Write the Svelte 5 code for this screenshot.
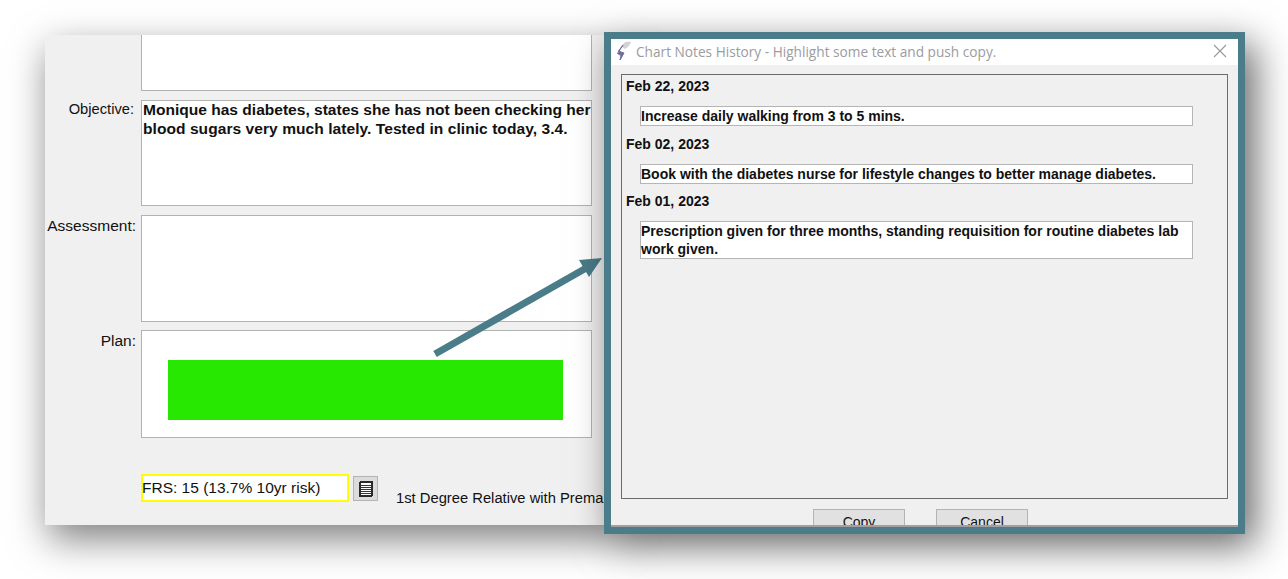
<script>
  const notes = [
    { date: 'Feb 22, 2023', text: 'Increase daily walking from 3 to 5 mins.' },
    { date: 'Feb 02, 2023', text: 'Book with the diabetes nurse for lifestyle changes to better manage diabetes.' },
    { date: 'Feb 01, 2023', text: 'Prescription given for three months, standing requisition for routine diabetes lab work given.' }
  ];
</script>

<div class="canvas">
  <section class="panel">
    <div class="form">
      <div class="row"><span class="label"></span><div class="field f1"></div></div>
      <div class="row"><span class="label l-obj">Objective:</span><div class="field f2 bold"><div class="lines">Monique has diabetes, states she has not been checking her<br /><span class="line2">blood sugars very much lately. Tested in clinic today, 3.4.</span></div></div></div>
      <div class="row"><span class="label l-ass">Assessment:</span><div class="field f3"></div></div>
      <div class="row"><span class="label l-plan">Plan:</span><div class="field f4"><div class="redact"></div></div></div>
    </div>
    <div class="footer">
      <div class="frs">FRS: 15 (13.7% 10yr risk)</div>
      <button class="iconbtn" aria-label="Notes">
        <svg width="14" height="16" viewBox="0 0 14 16" shape-rendering="crispEdges">
          <rect x="1" y="1" width="12" height="14" rx="1" fill="#fff" stroke="#2a2a2a" stroke-width="2"/>
          <path d="M2 4.5h10M2 6.5h10M2 8.5h10M2 10.5h10M2 12.5h10" stroke="#333" stroke-width="1"/>
        </svg>
      </button>
      <span class="relative">1st Degree Relative with Prema</span>
    </div>
  </section>

  <svg class="arrow" width="180" height="110" viewBox="0 0 180 110">
    <path d="M5 104 L158 17" stroke="#4a7c89" stroke-width="7" fill="none"/>
    <path d="M172 8 L149 10 L159 27 Z" fill="#4a7c89"/>
  </svg>

  <section class="dialog">
    <header class="titlebar">
      <svg class="logo" width="16" height="21" viewBox="0 0 16 21">
        <path d="M15 1 C10 0 6 2 6 6 L9 8 C12 6 14 4 15 1 Z" fill="#d2d2d6"/>
        <path d="M7 4 L2.5 10 L8 12 L4 19 L5 14.5 L1.5 12.5 Z" fill="#6f6f9a" stroke="#6f6f9a" stroke-width="1" stroke-linejoin="round"/>
      </svg>
      <span class="title">Chart Notes History - Highlight some text and push copy.</span>
      <svg class="close" width="14" height="14" viewBox="0 0 14 14">
        <path d="M1 1 L13 13 M13 1 L1 13" stroke="#999" stroke-width="1.1" fill="none"/>
      </svg>
    </header>
    <div class="body">
      <div class="history">
        {#each notes as n}
          <div class="date">{n.date}</div>
          <div class="note">{n.text}</div>
        {/each}
      </div>
      <div class="actions">
        <button class="btn">Copy</button>
        <button class="btn">Cancel</button>
      </div>
    </div>
  </section>
</div>

<style>
  :global(body) {
    margin: 0;
    background: #fff;
  }
  .canvas {
    position: relative;
    width: 1288px;
    height: 579px;
    overflow: hidden;
    font-family: "Liberation Sans", Arial, sans-serif;
    font-size: 14px;
    color: #111;
    background: #fff;
  }
  .panel {
    position: absolute;
    left: 45px;
    top: 35px;
    width: 570px;
    height: 490px;
    background: #f0f0f0;
    box-shadow: 4px 14px 36px rgba(0, 0, 0, 0.5);
    overflow: hidden;
  }
  .form {
    display: flex;
    flex-direction: column;
    gap: 8px;
    margin-top: -1px;
  }
  .row {
    display: grid;
    grid-template-columns: 96px 451px;
  }
  .label {
    text-align: right;
    padding-right: 5px;
    font-size: 15.5px;
    line-height: 18px;
  }
  .l-obj { padding: 0 7px 0 0; font-size: 14.7px; }
  .l-ass { padding-top: 2px; }
  .l-plan { padding-top: 2px; }
  .field {
    box-sizing: border-box;
    background: #fff;
    border: 1px solid #b2b2b2;
  }
  .f1 { height: 57px; margin-bottom: 1px; border-top: 0; }
  .f2 { height: 106px; margin-bottom: 1px; padding: 0 0 0 1px; }
  .f3 { height: 107px; }
  .f4 { height: 108px; padding: 29px 28px 0 26px; }
  .bold {
    font-weight: 700;
    font-size: 15.55px;
    line-height: 19px;
    white-space: nowrap;
  }
  .lines { margin-top: -1px; }
  .line2 { letter-spacing: 0.05px; }
  .redact {
    height: 60px;
    background: #27e800;
  }
  .footer {
    position: absolute;
    left: 96px;
    top: 439px;
    display: flex;
    align-items: flex-start;
    white-space: nowrap;
    font-size: 15.5px;
  }
  .frs {
    box-sizing: border-box;
    width: 208px;
    height: 28px;
    border: 2px solid #ffff00;
    background: #fff;
    text-indent: -1px;
    line-height: 24px;
  }
  .iconbtn {
    box-sizing: border-box;
    width: 25px;
    height: 25px;
    margin: 2px 0 0 4px;
    padding: 0;
    display: flex;
    align-items: center;
    justify-content: center;
    background: #dcdcdc;
    border: 1px solid #b4b4b4;
  }
  .relative {
    margin: 15px 0 0 18px;
    font-size: 14.75px;
    line-height: 18px;
  }
  .arrow {
    position: absolute;
    left: 430px;
    top: 250px;
  }
  .dialog {
    position: absolute;
    left: 604px;
    top: 32px;
    box-sizing: border-box;
    width: 641px;
    height: 502px;
    border: 7px solid #4a7c89;
    background: #f0f0f0;
    box-shadow: 10px 12px 36px rgba(0, 0, 0, 0.6);
    display: flex;
    flex-direction: column;
    overflow: hidden;
  }
  .titlebar {
    flex: none;
    box-sizing: border-box;
    height: 26px;
    background: #fff;
    display: flex;
    align-items: center;
    padding: 0 11px 2px 5px;
  }
  .logo { flex: none; margin-right: 4px; }
  .title {
    flex: 1;
    color: #9b9ba0;
    font-family: "Open Sans", "Noto Sans", sans-serif;
    font-size: 13.67px;
    white-space: nowrap;
  }
  .body {
    flex: 1;
    padding: 9px 10px 0 10px;
    min-height: 0;
    overflow: hidden;
    border-bottom: 2px solid #a0a0a0;
  }
  .history {
    box-sizing: border-box;
    height: 425px;
    border: 1px solid #6c6c6c;
    padding: 3px 34px 0 4px;
  }
  .date {
    font-weight: 700;
    line-height: 17px;
    margin-bottom: 11px;
  }
  .note {
    box-sizing: border-box;
    margin: 0 0 9.5px 14px;
    padding: 0;
    border: 1px solid #b5b5b5;
    background: #fff;
    font-weight: 700;
    line-height: 18px;
  }
  .actions {
    display: flex;
    justify-content: center;
    gap: 31px;
    margin-top: 10px;
    padding-right: 8px;
  }
  .btn {
    box-sizing: border-box;
    width: 92px;
    height: 25px;
    padding: 0;
    display: block;
    font: 14px/18px "Liberation Sans", Arial, sans-serif;
    color: #111;
    background: #e1e1e1;
    border: 1px solid #b4b4b4;
    text-align: center;
  }
</style>
